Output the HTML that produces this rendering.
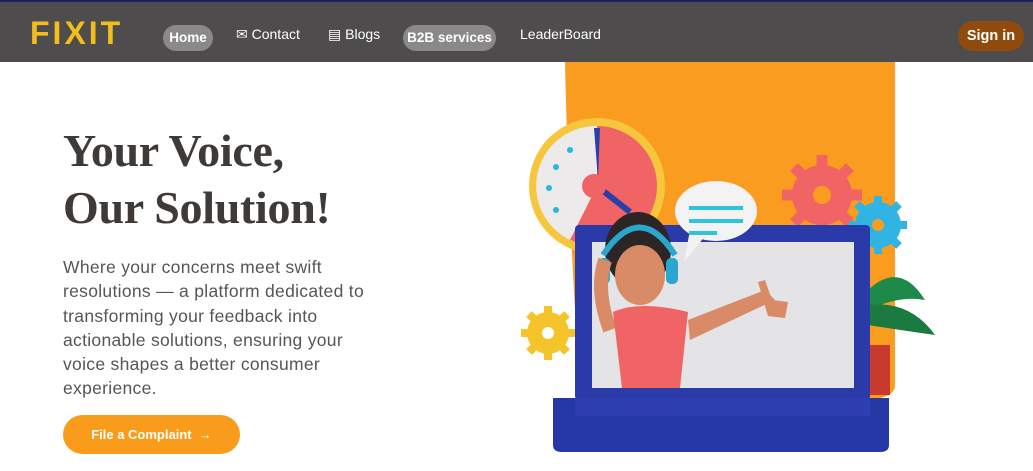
<!DOCTYPE html>
<html><head><style>
*{margin:0;padding:0;box-sizing:border-box}
body{width:1033px;height:471px;overflow:hidden;background:#fff;font-family:"Liberation Sans",sans-serif;position:relative}
.nav{position:absolute;left:0;top:0;width:1033px;height:62px;background:#4e4c4c;border-top:2px solid #1d1f5e}
.logo{position:absolute;left:30px;top:13px;font-size:32px;font-weight:bold;color:#f2bd1d;letter-spacing:3px}
.ni{position:absolute;color:#fff;font-size:14px;top:24px}
.pill{position:absolute;background:#8a8888;color:#fff;font-weight:bold;font-size:13.5px;border-radius:14px;height:26px;line-height:26px;top:23px;text-align:center}
.sign{position:absolute;left:958px;top:19px;width:66px;height:30px;border-radius:15px;background:#8f4a0c;color:#fff;font-weight:bold;font-size:14.5px;line-height:30px;text-align:center}
h1{position:absolute;left:63px;top:122px;font-family:"Liberation Serif",serif;font-weight:bold;font-size:46px;line-height:57px;color:#3d3a38;letter-spacing:-0.3px}
p{position:absolute;left:63px;top:255px;width:340px;font-size:17.5px;line-height:24.3px;color:#555;white-space:nowrap;letter-spacing:0.3px}
.btn{position:absolute;left:63px;top:415px;width:177px;height:39px;border-radius:20px;background:#f99c1b;color:#fff;font-weight:bold;font-size:13px;line-height:39px;text-align:center}
</style></head><body>
<div class="nav">
<div class="logo">FIXIT</div>
<div class="pill" style="left:163px;width:50px">Home</div>
<div class="ni" style="left:236px">✉ Contact</div>
<div class="ni" style="left:328px">▤ Blogs</div>
<div class="pill" style="left:403px;width:93px">B2B services</div>
<div class="ni" style="left:520px">LeaderBoard</div>
<div class="sign">Sign in</div>
</div>
<h1>Your Voice,<br>Our Solution!</h1>
<p>Where your concerns meet swift<br>resolutions — a platform dedicated to<br>transforming your feedback into<br>actionable solutions, ensuring your<br>voice shapes a better consumer<br>experience.</p>
<div class="btn">File a Complaint &nbsp;→</div>
<svg style="position:absolute;left:0;top:0" width="1033" height="471">
<path d="M565 62 H895 V385 Q895 395 880 398 L580 398 Q568 200 565 62Z" fill="#f99c1f"/>
<circle cx="597" cy="186" r="68" fill="#f6c63c"/>
<circle cx="597" cy="186" r="60" fill="#f06466"/>
<path d="M597 126 A60 60 0 0 0 570 240 L597 186Z" fill="#eceaea"/>
<circle cx="570" cy="150" r="3" fill="#29b6e0"/><circle cx="556" cy="167" r="3" fill="#29b6e0"/><circle cx="549" cy="188" r="3" fill="#29b6e0"/><circle cx="556" cy="210" r="3" fill="#29b6e0"/>
<path d="M594 128 L600 128 L598 180Z" fill="#2b3fa8"/>
<path d="M597 186 L630 212" stroke="#2b3fa8" stroke-width="6"/>
<circle cx="594" cy="186" r="12" fill="#f06466"/>
<g fill="#f06466">
<circle cx="822" cy="195" r="30"/>
<g stroke="#f06466" stroke-width="11">
<line x1="822" y1="155" x2="822" y2="235"/><line x1="782" y1="195" x2="862" y2="195"/>
<line x1="794" y1="167" x2="850" y2="223"/><line x1="850" y1="167" x2="794" y2="223"/></g></g>
<circle cx="822" cy="195" r="9" fill="#f99c1f"/>
<g fill="#30b4e4"><circle cx="878" cy="225" r="23"/>
<g stroke="#30b4e4" stroke-width="8">
<line x1="878" y1="196" x2="878" y2="254"/><line x1="849" y1="225" x2="907" y2="225"/>
<line x1="857" y1="204" x2="899" y2="246"/><line x1="899" y1="204" x2="857" y2="246"/></g></g>
<circle cx="878" cy="225" r="6" fill="#f99c1f"/>
<g fill="#f5c32a"><circle cx="548" cy="333" r="21"/>
<g stroke="#f5c32a" stroke-width="8">
<line x1="548" y1="306" x2="548" y2="360"/><line x1="521" y1="333" x2="575" y2="333"/>
<line x1="529" y1="314" x2="567" y2="352"/><line x1="567" y1="314" x2="529" y2="352"/></g></g>
<circle cx="548" cy="333" r="6" fill="#fff"/>
<path d="M868 290 Q900 260 925 300 Q900 295 868 310Z" fill="#1e8a4a"/>
<path d="M868 305 Q910 300 935 335 Q900 330 868 325Z" fill="#1a7a40"/>
<rect x="868" y="345" width="22" height="50" fill="#c93a2e"/>
<rect x="575" y="225" width="295" height="175" rx="4" fill="#2a3aa8"/>
<rect x="592" y="242" width="262" height="146" fill="#e4e3e6"/>
<path d="M553 398 H889 V445 Q889 452 880 452 H562 Q553 452 553 445Z" fill="#2637a6"/>
<rect x="575" y="398" width="295" height="18" fill="#2d3eb0"/>
<ellipse cx="716" cy="211" rx="41" ry="30" fill="#f3f3f3"/>
<path d="M690 230 L684 262 L705 236Z" fill="#f3f3f3"/>
<rect x="689" y="206" width="54" height="4" fill="#2ec4dc"/><rect x="689" y="219" width="54" height="4" fill="#2ec4dc"/><rect x="689" y="231" width="28" height="4" fill="#2ec4dc"/>
<ellipse cx="638" cy="250" rx="33" ry="38" fill="#2b2525"/>
<ellipse cx="640" cy="275" rx="25" ry="30" fill="#d98b67"/>
<path d="M603 255 Q640 200 675 255" stroke="#2aa6cf" stroke-width="6" fill="none"/>
<rect x="598" y="258" width="12" height="26" rx="5" fill="#2aa6cf"/>
<rect x="666" y="258" width="12" height="26" rx="5" fill="#2aa6cf"/>
<path d="M610 330 Q595 290 605 260" stroke="#d98b67" stroke-width="14" fill="none"/>
<path d="M613 312 Q640 300 688 312 L680 388 L622 388Z" fill="#f06466"/>
<path d="M688 320 L765 290 L775 300 L690 340Z" fill="#d98b67"/>
<path d="M758 282 L765 280 L772 300 L788 302 L785 318 L768 316Z" fill="#d98b67"/>
</svg>
</body></html>
